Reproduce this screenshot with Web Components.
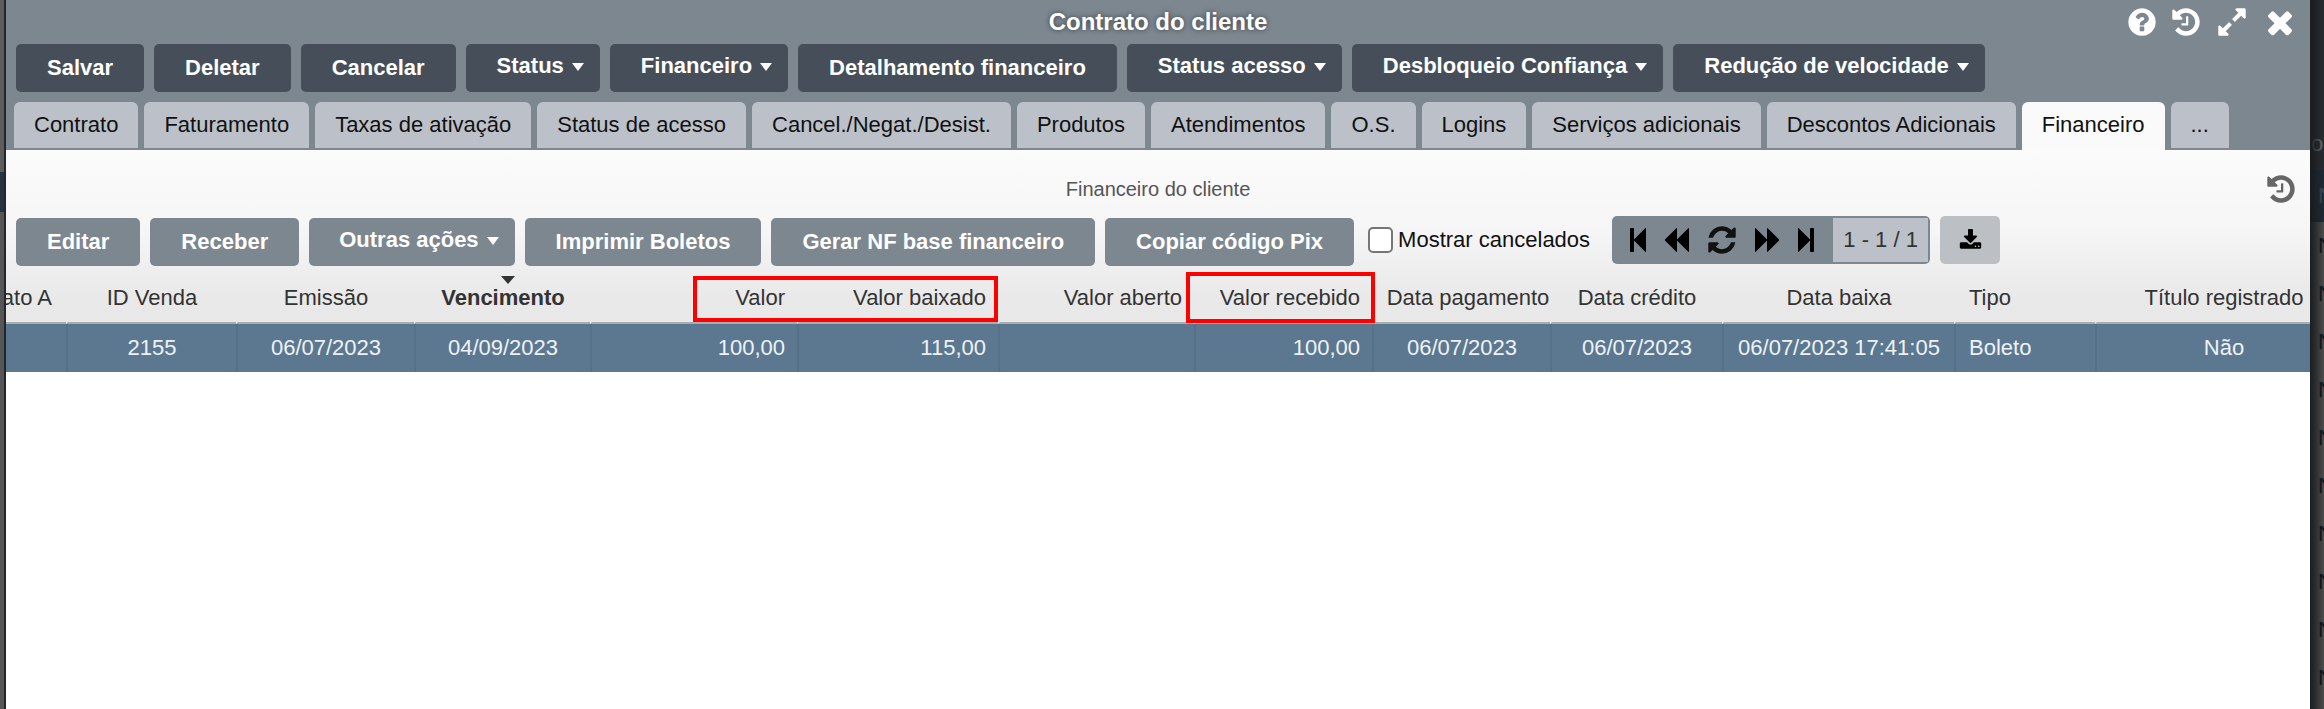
<!DOCTYPE html>
<html lang="pt-BR">
<head>
<meta charset="utf-8">
<title>Contrato do cliente</title>
<style>
  html, body { margin: 0; height: 709px; overflow: hidden; background: #fff; }
  body { font-family: "Liberation Sans", Arial, sans-serif; }
</style>
</head>
<body>
<contract-page>
  <side-strip slot="left" side="left"></side-strip>
  <contract-modal heading="Contrato do cliente">
    <ui-btn>Salvar</ui-btn>
    <ui-btn>Deletar</ui-btn>
    <ui-btn>Cancelar</ui-btn>
    <ui-btn caret>Status</ui-btn>
    <ui-btn caret>Financeiro</ui-btn>
    <ui-btn>Detalhamento financeiro</ui-btn>
    <ui-btn caret>Status acesso</ui-btn>
    <ui-btn caret>Desbloqueio Confiança</ui-btn>
    <ui-btn caret>Redução de velocidade</ui-btn>

    <ui-tab slot="tabs">Contrato</ui-tab>
    <ui-tab slot="tabs">Faturamento</ui-tab>
    <ui-tab slot="tabs">Taxas de ativação</ui-tab>
    <ui-tab slot="tabs">Status de acesso</ui-tab>
    <ui-tab slot="tabs">Cancel./Negat./Desist.</ui-tab>
    <ui-tab slot="tabs">Produtos</ui-tab>
    <ui-tab slot="tabs">Atendimentos</ui-tab>
    <ui-tab slot="tabs">O.S.</ui-tab>
    <ui-tab slot="tabs">Logins</ui-tab>
    <ui-tab slot="tabs">Serviços adicionais</ui-tab>
    <ui-tab slot="tabs">Descontos Adicionais</ui-tab>
    <ui-tab slot="tabs" active>Financeiro</ui-tab>
    <ui-tab slot="tabs">...</ui-tab>

    <finance-panel slot="body" heading="Financeiro do cliente">
      <ui-btn light>Editar</ui-btn>
      <ui-btn light>Receber</ui-btn>
      <ui-btn light caret>Outras ações</ui-btn>
      <ui-btn light>Imprimir Boletos</ui-btn>
      <ui-btn light>Gerar NF base financeiro</ui-btn>
      <ui-btn light>Copiar código Pix</ui-btn>
      <check-field>Mostrar cancelados</check-field>
      <grid-pager>1 - 1 / 1</grid-pager>
      <export-btn></export-btn>
      <finance-grid slot="grid"></finance-grid>
    </finance-panel>
  </contract-modal>
  <side-strip slot="right" side="right"></side-strip>
</contract-page>

<script>
// font awesome 4 shapes, all on a 1792 box
const ICONS = {
  help: 'M1024 1376v-192q0-14-9-23t-23-9h-192q-14 0-23 9t-9 23v192q0 14 9 23t23 9h192q14 0 23-9t9-23zm256-672q0-88-55.5-163t-138.5-116-170-41q-243 0-371 213-15 24 8 42l132 100q7 6 19 6 16 0 25-12 53-68 86-92 34-24 86-24 48 0 85.5 26t37.5 59q0 38-20 61t-68 45q-63 28-115.5 86.5t-52.5 125.5v36q0 14 9 23t23 9h192q14 0 23-9t9-23q0-19 21.5-49.5t54.5-49.5q32-18 49-28.5t46-35 44.5-48 28-60.5 12.5-81zm384 192q0 209-103 385.5t-279.5 279.5-385.5 103-385.5-103-279.5-279.5-103-385.5 103-385.5 279.5-279.5 385.5-103 385.5 103 279.5 279.5 103 385.5z',
  history: 'M1664 896q0 156-61 298t-164 245-245 164-298 61q-172 0-327-72.5t-264-204.5q-7-10-6.5-22.5t8.5-20.5l137-138q10-9 25-9 16 2 23 12 73 95 179 147t225 52q104 0 198.5-40.5t163.5-109.5 109.5-163.5 40.5-198.5-40.5-198.5-109.5-163.5-163.5-109.5-198.5-40.5q-98 0-188 35.5t-160 101.5l137 138q31 30 14 69-17 40-59 40h-448q-26 0-45-19t-19-45v-448q0-42 40-59 39-17 69 14l130 129q107-101 244.5-156.5t284.5-55.5q156 0 298 61t245 164 164 245 61 298zm-640-288v448q0 14-9 23t-23 9h-320q-14 0-23-9t-9-23v-64q0-14 9-23t23-9h224v-352q0-14 9-23t23-9h64q14 0 23 9t9 23z',
  expand: 'M883 1056q0 13-10 23l-332 332 144 144q19 19 19 45t-19 45-45 19h-448q-26 0-45-19t-19-45v-448q0-26 19-45t45-19 45 19l144 144 332-332q10-10 23-10t23 10l114 114q10 10 10 23zm781-864v448q0 26-19 45t-45 19-45-19l-144-144-332 332q-10 10-23 10t-23-10l-114-114q-10-10-10-23t10-23l332-332-144-144q-19-19-19-45t19-45 45-19h448q26 0 45 19t19 45z',
  close: 'M1490 1322q0 40-28 68l-136 136q-28 28-68 28t-68-28l-294-294-294 294q-28 28-68 28t-68-28l-136-136q-28-28-28-68t28-68l294-294-294-294q-28-28-28-68t28-68l136-136q28-28 68-28t68 28l294 294 294-294q28-28 68-28t68 28l136 136q28 28 28 68t-28 68l-294 294 294 294q28 28 28 68z',
  first: 'M1363 141q19-19 32-13t13 32v1472q0 26-13 32t-32-13l-710-710q-9-9-13-19v678q0 26-19 45t-45 19h-128q-26 0-45-19t-19-45v-1408q0-26 19-45t45-19h128q26 0 45 19t19 45v678q4-10 13-19z',
  prev: 'M1683 141q19-19 32-13t13 32v1472q0 26-13 32t-32-13l-710-710q-9-9-13-19v710q0 26-13 32t-32-13l-710-710q-19-19-19-45t19-45l710-710q19-19 32-13t13 32v710q4-10 13-19z',
  refresh: 'M1639 1056q0 5-1 7-64 268-268 434.5t-478 166.5q-146 0-282.5-55t-243.5-157l-129 129q-19 19-45 19t-45-19-19-45v-448q0-26 19-45t45-19h448q26 0 45 19t19 45-19 45l-137 137q71 66 161 102t187 36q134 0 250-65t186-179q11-17 53-117 8-23 30-23h192q13 0 22.5 9.5t9.5 22.5zm25-800v448q0 26-19 45t-45 19h-448q-26 0-45-19t-19-45 19-45l138-138q-148-137-349-137-134 0-250 65t-186 179q-11 17-53 117-8 23-30 23h-199q-13 0-22.5-9.5t-9.5-22.5v-7q65-268 270-434.5t480-166.5q146 0 284 55.5t245 156.5l130-129q19-19 45-19t45 19 19 45z',
  next: 'M109 1651q-19 19-32 13t-13-32v-1472q0-26 13-32t32 13l710 710q9 9 13 19v-710q0-26 13-32t32 13l710 710q19 19 19 45t-19 45l-710 710q-19 19-32 13t-13-32v-710q-4 10-13 19z',
  last: 'M429 1651q-19 19-32 13t-13-32v-1472q0-26 13-32t32 13l710 710q9 9 13 19v-678q0-26 19-45t45-19h128q26 0 45 19t19 45v1408q0 26-19 45t-45 19h-128q-26 0-45-19t-19-45v-678q-4 10-13 19z',
  download: 'M1344 1344q0-26-19-45t-45-19-45 19-19 45 19 45 45 19 45-19 19-45zm256 0q0-26-19-45t-45-19-45 19-19 45 19 45 45 19 45-19 19-45zm128-224v320q0 40-28 68t-68 28h-1472q-40 0-68-28t-28-68v-320q0-40 28-68t68-28h465l135 136q58 56 136 56t136-56l136-136h464q40 0 68 28t28 68zm-325-569q17 41-14 70l-448 448q-18 19-45 19t-45-19l-448-448q-31-29-14-70 17-39 59-39h256v-448q0-26 19-45t45-19h256q26 0 45 19t19 45v448h256q42 0 59 39z'
};

const icon = (name, size) =>
  `<svg width="${size}" height="${size}" viewBox="0 0 1792 1792" fill="currentColor" aria-hidden="true"><path d="${ICONS[name]}"/></svg>`;

// small helper so every class below stays a few lines
const define = (tag, html, setup) => {
  customElements.define(tag, class extends HTMLElement {
    constructor() {
      super();
      this.attachShadow({ mode: 'open' }).innerHTML = typeof html === 'function' ? html(this) : html;
      if (setup) setup(this);
    }
  });
};

define('contract-page', `
  <style>
    :host { display: flex; width: 2324px; height: 709px; overflow: hidden; }
    ::slotted(contract-modal) { flex: 1; min-width: 0; }
  </style>
  <slot name="left"></slot><slot></slot><slot name="right"></slot>
`);

// the dimmed page behind the modal, only a sliver shows on each side
define('side-strip', (el) => el.getAttribute('side') === 'left' ? `
  <style>
    :host { display: flex; flex-direction: column; width: 6px; height: 709px; box-sizing: border-box; border-right: 2px solid #23272b; background: #565656; }
    div:nth-child(1) { height: 140px; background: #2b2f33; }
    div:nth-child(2) { height: 172px; background: #5d5d5d; }
    div:nth-child(3) { height: 40px; background: #26323d; }
  </style>
  <div></div><div></div><div></div>
` : `
  <style>
    :host { display: block; position: relative; width: 14px; height: 709px; overflow: hidden; background: #4c4c4c; font: 22px/48px "Liberation Sans", Arial, sans-serif; color: #10151a; }
    :host::after { content: ""; position: absolute; inset: 0; background: linear-gradient(90deg, rgba(25,28,31,.95) 0, rgba(25,28,31,.75) 30%, rgba(25,28,31,0) 100%); }
    .top { height: 170px; box-sizing: border-box; padding: 120px 0 0 1px; background: #282c30; color: #70757a; overflow: hidden; }
    .head { height: 52px; line-height: 52px; padding-left: 8px; background: #1e2a36; color: #3d4c5b; }
    .row { height: 48px; padding-left: 8px; white-space: nowrap; }
  </style>
  <div class="top">os</div>
  <div class="head">N</div>
  ${Array(10).fill('<div class="row">N</div>').join('')}
`);

define('contract-modal', (el) => `
  <style>
    :host { display: flex; flex-direction: column; height: 709px; background: #fff; font-family: "Liberation Sans", Arial, sans-serif; }
    .top { background: #7d8790; height: 150px; box-sizing: border-box; }
    .title { display: grid; grid-template-columns: 1fr auto 1fr; align-items: center; height: 44px; }
    h1 { grid-column: 2; margin: 0; font-size: 24px; font-weight: 700; color: #fff; text-shadow: 0 0 5px rgba(30,30,30,.7); }
    .icons { display: flex; justify-content: flex-end; align-items: center; gap: 14px; padding-right: 12px; color: #fff; }
    .icons svg { display: block; }
    .icons svg:first-child { margin-right: -2px; }
    .actions { display: flex; gap: 10px; padding-left: 10px; height: 48px; }
    .tabs { display: flex; gap: 6px; padding-left: 8px; margin-top: 10px; height: 48px; }
    .body { flex: 1; min-height: 0; }
  </style>
  <div class="top">
    <div class="title">
      <h1>${el.getAttribute('heading')}</h1>
      <div class="icons">${icon('help', 32)}${icon('history', 32)}${icon('expand', 32)}${icon('close', 36)}</div>
    </div>
    <div class="actions"><slot></slot></div>
    <div class="tabs"><slot name="tabs"></slot></div>
  </div>
  <div class="body"><slot name="body"></slot></div>
`);

define('ui-btn', (el) => {
  const caret = el.hasAttribute('caret');
  const light = el.hasAttribute('light');
  return `
  <style>
    :host { display: inline-flex; align-items: center; justify-content: center; height: 48px; box-sizing: border-box; padding: 0 ${caret ? '16px' : '31px'} 0 ${caret && light ? '30px' : '31px'};
      border-radius: 5px; background: ${light ? '#7d8790' : '#464f59'}; color: #fff;
      font: 700 22px "Liberation Sans", Arial, sans-serif; white-space: nowrap; }
    .label { display: inline-flex; align-items: center; ${caret ? 'margin-top: -4px;' : ''} }
    i { display: inline-block; margin-left: 8px; border: 6.5px solid transparent; border-top: 8px solid currentColor; border-bottom: 0; margin-top: 2px; }
  </style>
  <span class="label"><slot></slot>${caret ? '<i></i>' : ''}</span>
`;
});

define('ui-tab', (el) => `
  <style>
    :host { display: flex; align-items: center; box-sizing: border-box; height: ${el.hasAttribute('active') ? 48 : 46}px; padding: 0 20px;
      border-radius: 6px 6px 0 0; background: ${el.hasAttribute('active') ? '#fafafa' : '#bcc1c9'}; color: #111;
      font: 22px "Liberation Sans", Arial, sans-serif; white-space: nowrap; }
    span { display: block; ${el.hasAttribute('active') ? 'margin-top: -2px;' : ''} }
  </style>
  <span><slot></slot></span>
`);

define('finance-panel', (el) => `
  <style>
    :host { display: block; height: 559px; background: #fff linear-gradient(180deg, #fbfbfb 0, #f6f6f6 45%, #e9e9e9 85%, #e8e8e8 100%) 0 0 / 100% 174px no-repeat; font-family: "Liberation Sans", Arial, sans-serif; }
    .upper { height: 120px; box-sizing: border-box; }
    .heading { display: grid; grid-template-columns: 1fr auto 1fr; align-items: center; height: 68px; box-sizing: border-box; padding-top: 10px; color: #555; }
    h2 { grid-column: 2; margin: 0; font-size: 20px; font-weight: 400; }
    .history { display: flex; justify-content: flex-end; padding-right: 13px; color: #666; }
    .history svg { display: block; }
    .tools { display: flex; gap: 10px; align-items: center; padding-left: 10px; height: 48px; }
  </style>
  <div class="upper">
    <div class="heading"><h2>${el.getAttribute('heading')}</h2><div class="history">${icon('history', 32)}</div></div>
    <div class="tools"><slot></slot></div>
  </div>
  <slot name="grid"></slot>
`);

define('check-field', `
  <style>
    :host { display: inline-flex; align-items: center; gap: 5px; color: #111; font: 22px "Liberation Sans", Arial, sans-serif; white-space: nowrap; margin: 0 0 4px 4px; }
    input { appearance: none; box-sizing: border-box; width: 25px; height: 26px; margin: 0; background: #fff; border: 2px solid #767676; border-radius: 5px; }
  </style>
  <input type="checkbox"><span><slot></slot></span>
`);

define('grid-pager', () => `
  <style>
    :host { display: flex; width: 318px; height: 48px; box-sizing: border-box; margin: -4px 0 0 12px; padding: 2px 2px 2px 12px; border-radius: 5px; background: #7d8790; }
    .nav { display: flex; align-items: center; gap: 10px; width: 209px; flex: none; color: #000; }
    .nav svg { display: block; flex: none; }
    .nav .spin { display: flex; margin: 0 6px; color: #111; }
    .count { flex: 1; display: flex; align-items: center; justify-content: center; background: #bcc1c9; color: #333; font: 22px "Liberation Sans", Arial, sans-serif; white-space: nowrap; }
  </style>
  <div class="nav">${icon('first', 28)}${icon('prev', 28)}<span class="spin">${icon('refresh', 32)}</span>${icon('next', 28)}${icon('last', 28)}</div>
  <div class="count"><slot></slot></div>
`);

define('export-btn', () => `
  <style>
    :host { display: flex; align-items: center; justify-content: center; width: 60px; height: 48px; margin-top: -4px; border-radius: 5px; background: #bcc0c4; color: #000; }
    svg { display: block; }
  </style>
  ${icon('download', 23)}
`);

const COLUMNS = [
  { w: 132, title: 'Contrato A', value: '' },
  { w: 170, title: 'ID Venda', value: '2155' },
  { w: 178, title: 'Emissão', value: '06/07/2023' },
  { w: 176, title: 'Vencimento', value: '04/09/2023', sorted: true },
  { w: 207, title: 'Valor', value: '100,00', align: 'right' },
  { w: 201, title: 'Valor baixado', value: '115,00', align: 'right' },
  { w: 196, title: 'Valor aberto', value: '', align: 'right' },
  { w: 178, title: 'Valor recebido', value: '100,00', align: 'right' },
  { w: 178, title: 'Data pagamento', value: '06/07/2023', shift: true },
  { w: 172, title: 'Data crédito', value: '06/07/2023' },
  { w: 232, title: 'Data baixa', value: '06/07/2023 17:41:05' },
  { w: 141, title: 'Tipo', value: 'Boleto', align: 'left' },
  { w: 256, title: 'Título registrado', value: 'Não' }
];

define('finance-grid', () => `
  <style>
    :host { display: block; position: relative; overflow: hidden; font: 22px "Liberation Sans", Arial, sans-serif; }
    .grid { display: grid; margin-left: -72px; width: max-content; grid-template-columns: ${COLUMNS.map(c => c.w + 'px').join(' ')}; }
    .h, .c { display: flex; align-items: center; justify-content: center; box-sizing: border-box; white-space: nowrap; min-width: 0; }
    .h { position: relative; height: 54px; padding-top: 4px; color: #333; border-left: 2px solid transparent; border-bottom: 2px solid #a9adb1; }
    .h:first-child { padding-right: 2px; }
    .c { height: 48px; color: #eef2f5; background: #5c7891; border-left: 2px solid #557087; }
    .right { justify-content: flex-end; padding-right: 12px; }
    .left { justify-content: flex-start; padding-left: 13px; }
    .shift { padding-left: 12px; }
    .sorted { font-weight: 700; }
    .sorted::before { content: ""; position: absolute; left: 85px; top: 6px; border: 7px solid transparent; border-top: 8px solid #333; border-bottom: 0; }
    .mark { position: absolute; box-sizing: border-box; border: 4px solid #f00; }
  </style>
  <div class="grid">
    ${COLUMNS.map(c => `<div class="h ${c.align || ''} ${c.sorted ? 'sorted' : ''} ${c.shift ? 'shift' : ''}">${c.title}</div>`).join('')}
    ${COLUMNS.map(c => `<div class="c ${c.align || ''}">${c.value}</div>`).join('')}
  </div>
  <!-- red marks drawn on top of the headers -->
  <div class="mark" style="left:687px;top:6px;width:305px;height:46px"></div>
  <div class="mark" style="left:1180px;top:2px;width:189px;height:51px"></div>
`);
</script>
</body>
</html>
